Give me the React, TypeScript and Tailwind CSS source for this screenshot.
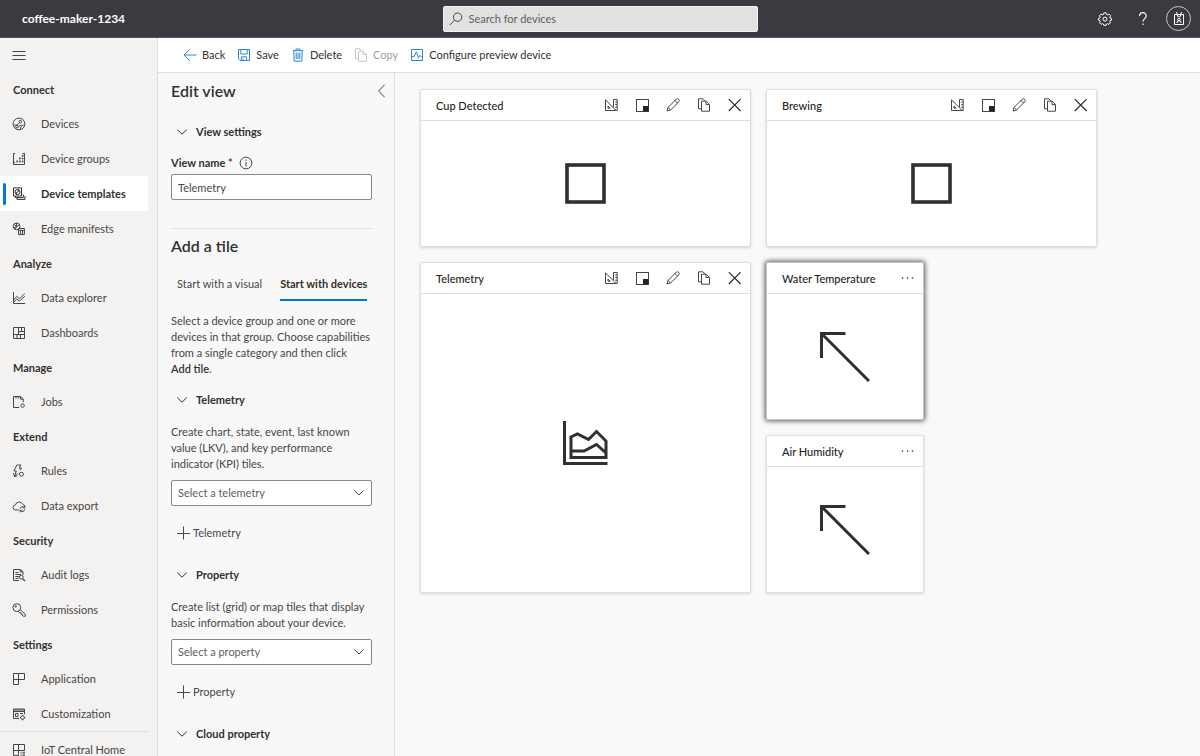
import type { ReactNode } from "react";

type IconProps = { className?: string; children: ReactNode; box?: string; sw?: number };

function Svg({ className = "size-3.5", children, box = "0 0 14 14", sw = 1 }: IconProps) {
  return (
    <svg
      viewBox={box}
      className={`${className} shrink-0`}
      fill="none"
      stroke="currentColor"
      strokeWidth={sw}
      aria-hidden="true"
    >
      {children}
    </svg>
  );
}

const icons: Record<string, ReactNode> = {
  devices: (
    <>
      <circle cx="7" cy="7" r="5.9" />
      <circle cx="8.3" cy="4.6" r="1.3" />
      <circle cx="5" cy="9.7" r="1.3" />
      <path d="M2 8.4C4 7.6 5.6 8 6.4 6.8L7.5 5.7M6.3 9.6L9.4 7.8M8.6 12.6C8.2 10.4 9.2 8 11.8 8.2" />
    </>
  ),
  groups: (
    <>
      <path d="M3 1.5H1.5V12.5H12.5V1.5H10.5M1.5 10.5H3" />
      <g fill="currentColor" stroke="none">
        <rect x="4.2" y="8.6" width="1.7" height="1.7" />
        <rect x="7" y="8.6" width="1.7" height="1.7" />
        <rect x="9.8" y="8.6" width="1.7" height="1.7" />
        <rect x="7" y="5.6" width="1.7" height="1.7" />
        <rect x="9.8" y="5.6" width="1.7" height="1.7" />
        <rect x="9.8" y="2.8" width="1.7" height="1.7" />
      </g>
    </>
  ),
  templates: (
    <>
      <path d="M1.5 .9H9.5V9H1.5ZM11.3 7.5V10.6H3.2V9M13 9V12.4H5V10.6" />
      <circle cx="5.5" cy="5" r="2.5" />
      <path d="M3.6 6.6L7.3 3.4M6.3 2.2V4.4M4.6 5.6V7.6" />
    </>
  ),
  edge: (
    <>
      <circle cx="4.6" cy="4.4" r="3.4" />
      <path d="M1.6 5.6L4.4 4.8L7.4 2.8M4.6 1V4.4M3.4 7.2L4.2 5M2.4 2.4L4.5 4.5" />
      <path d="M6.5 6.5H12.4V12.6H6.5ZM6.5 8.3H12.4M8.5 8.3V12.6M10.5 8.3V12.6" />
    </>
  ),
  explorer: <path d="M1.5 1V12.5H13.2M1.5 9.2L4.8 5.4L7.6 7.8L12.8 2.4M1.5 11.4L4.8 8.2L7.6 10L12.8 5.2" />,
  dashboards: <path d="M1.5 1.5H12.5V12.5H1.5ZM6.5 1.5V8.5M1.5 8.5H12.5M8.5 8.5V12.5M6.5 5.5H12.5M9.5 5.5V1.5M5 8.5V12.5" />,
  jobs: (
    <>
      <path d="M7.3 12.5H1.5V1.5H8.6L11.2 4V7.2M8.4 1.4V4.2H11.2M4 1.4V3.6M6.2 1.4V3.6" />
      <circle cx="10.6" cy="10.6" r="1.7" />
    </>
  ),
  rules: (
    <>
      <path d="M4.9 1H8.9L7.2 4.2H9.6L7.7 6.3M4.9 1L1.9 7H4.3L2.6 12.6L5.8 9.4M1.4 9.2L2.6 12.6L5.4 11.8" />
      <circle cx="9.4" cy="10.2" r="2" />
    </>
  ),
  export: (
    <>
      <path d="M7 11H3.6A2.5 2.5 0 0 1 3.4 6A3.9 3.9 0 0 1 10.8 5.4A2.6 2.6 0 0 1 13 7.5" />
      <path d="M8 9.8A2.4 2.4 0 0 1 12.3 8.6M12.7 6.8V8.9H10.6M12.7 10.4A2.4 2.4 0 0 1 8.4 11.6M8.1 13.3V11.3H10.2" />
    </>
  ),
  audit: (
    <>
      <path d="M7 12.5H1.5V1.5H8.4L11 3.8V7M8.2 1.3V4H11M3.4 4.5H6.4M3.4 6.5H9M3.4 8.5H7M3.4 10.5H6.4" />
      <circle cx="9.3" cy="9.2" r="1.9" />
      <path d="M10.6 10.6L13 13" strokeWidth="1.3" />
    </>
  ),
  permissions: (
    <>
      <circle cx="4.8" cy="4.6" r="3.9" />
      <circle cx="3.7" cy="3.5" r=".7" />
      <path d="M8.2 6.4L13.3 11.4V13.2H11.2L10.2 12.2V11H9V9.8H7.8L6 8.3" />
    </>
  ),
  application: <path d="M1.5 1.5H6.5V12.5H1.5ZM1.5 7.5H12.5V1.5H6.5" />,
  customization: (
    <>
      <path d="M7.2 11.5H1.5V2H12.5V7.4M1.5 4.5H12.5M1.5 3H12.5M3.5 6.5H6V9.5H3.5ZM8 6.5H11" />
      <circle cx="10.6" cy="10.6" r="1.8" />
      <path d="M10.6 7.8V8.8M10.6 12.4V13.4M7.8 10.6H8.8M12.4 10.6H13.4" />
    </>
  ),
  home: (
    <>
      <path d="M6.5 12.5H1.5V1.5H12.5V7.5H1.5M6.5 1.5V12.5" />
      <path d="M8.6 9.3H9.6M10.5 9.3H13M8.6 11H9.6M10.5 11H13M8.6 12.7H9.6M10.5 12.7H13" />
    </>
  ),
};

const nav: { title: string; items: [string, string][] }[] = [
  {
    title: "Connect",
    items: [
      ["Devices", "devices"],
      ["Device groups", "groups"],
      ["Device templates", "templates"],
      ["Edge manifests", "edge"],
    ],
  },
  { title: "Analyze", items: [["Data explorer", "explorer"], ["Dashboards", "dashboards"]] },
  { title: "Manage", items: [["Jobs", "jobs"]] },
  { title: "Extend", items: [["Rules", "rules"], ["Data export", "export"]] },
  { title: "Security", items: [["Audit logs", "audit"], ["Permissions", "permissions"]] },
  { title: "Settings", items: [["Application", "application"], ["Customization", "customization"]] },
];

function NavItem({ label, icon, active = false }: { label: string; icon: string; active?: boolean }) {
  return (
    <a
      href="#"
      aria-current={active ? "page" : undefined}
      className={`relative mr-[9px] flex h-[35px] shrink-0 items-center gap-[15px] pl-3 whitespace-nowrap ${
        active ? "bg-white font-bold text-[#323130]" : "text-[#484644]"
      }`}
    >
      {active && <span className="absolute left-[3px] h-[22px] w-[3px] rounded-sm bg-[#0078d4]" />}
      <Svg>{icons[icon]}</Svg>
      {label}
    </a>
  );
}

function Sidebar() {
  return (
    <nav className="flex w-[158px] shrink-0 flex-col border-r border-[#e1dfdd] bg-[#f3f2f1]">
      <button aria-label="Toggle navigation" className="flex h-[34px] shrink-0 items-center pl-3 text-[#484644]">
        <Svg>
          <path d="M.5 3.5H13.5M.5 7.5H13.5M.5 11.5H13.5" />
        </Svg>
      </button>
      {nav.map((group) => (
        <section key={group.title}>
          <h2 className="flex h-[34px] items-center pt-px pl-[13px] font-bold text-[#323130]">{group.title}</h2>
          {group.items.map(([label, icon]) => (
            <NavItem key={label} label={label} icon={icon} active={label === "Device templates"} />
          ))}
        </section>
      ))}
      <hr className="mr-[9px] border-[#e1dfdd]" />
      <NavItem label="IoT Central Home" icon="home" />
    </nav>
  );
}

function TopBar() {
  return (
    <header className="grid h-[38px] shrink-0 grid-cols-[1fr_315px_1fr] items-center border-b border-[#55545a] bg-[#3b3a40] text-white">
      <span className="pl-[22px] text-xs font-bold">coffee-maker-1234</span>
      <label className="flex h-[26px] items-center gap-1.5 rounded-xs border border-[#f3f2f1] bg-[#e1e1e1] px-[5px] text-[#484644]">
        <Svg>
          <circle cx="8.6" cy="5.2" r="4.2" />
          <path d="M5.6 8.2L.8 13" />
        </Svg>
        <input
          type="search"
          aria-label="Search for devices"
          placeholder="Search for devices"
          className="min-w-0 flex-1 bg-transparent outline-none placeholder:text-[#605e5c]"
        />
      </label>
      <div className="flex items-center justify-end pr-[9px]">
        <button aria-label="Settings">
          <Svg>
            <path d="M5.8 .9H8.2L8.6 2.5L9.6 2.9L11.1 2.1L12.6 3.7L11.8 5.1L12.2 6L13.4 6.3V8.3L12 8.7L11.7 9.6L12.4 10.9L10.9 12.4L9.5 11.6L8.6 12L8.2 13.3H5.8L5.4 12L4.5 11.6L3.1 12.4L1.6 10.9L2.3 9.6L2 8.7L.6 8.3V6.3L1.8 6L2.2 5.1L1.4 3.7L2.9 2.1L4.4 2.9L5.4 2.5Z" />
            <circle cx="7" cy="7.1" r="2" />
          </Svg>
        </button>
        <button aria-label="Help" className="ml-6">
          <Svg sw={1.2}>
            <path d="M3.6 4A3.3 3.3 0 0 1 10.2 4C10.2 6.4 7 6.8 7 9.6M7 11.6V13" />
          </Svg>
        </button>
        <button
          aria-label="Account"
          className="ml-4 flex size-[25px] items-center justify-center rounded-full border border-[#c8c6c4]"
        >
          <Svg>
            <path d="M2.5 2.5H11.5V12.5H2.5ZM4.4 0L5.4 2.5M9.6 0L8.6 2.5M5.4 2.5V4.2H8.6V2.5M4.9 11L5.6 8.9H8.4L9.1 11" />
            <circle cx="7" cy="7.3" r="1.3" />
          </Svg>
        </button>
      </div>
    </header>
  );
}

function CommandButton({ label, children, disabled = false }: { label: string; children: ReactNode; disabled?: boolean }) {
  return (
    <button disabled={disabled} className="flex items-center gap-[5px] text-[#323130] disabled:text-[#a19f9d]">
      <span className={disabled ? "text-[#c8c6c4]" : "text-[#2b88d8]"}>{children}</span>
      {label}
    </button>
  );
}

function CommandBar() {
  return (
    <div className="flex h-[35px] shrink-0 items-center gap-3 border-b border-[#e1dfdd] bg-white pl-[25px] whitespace-nowrap">
      <CommandButton label="Back">
        <Svg>
          <path d="M13.5 7H1M6.6 1.4L1 7L6.6 12.6" />
        </Svg>
      </CommandButton>
      <CommandButton label="Save">
        <Svg>
          <path d="M1.5 1.5H12.5V12.5H3.2L1.5 10.8ZM3.8 1.5V6H10.2V1.5M4.2 12.5V8.8H9.6V12.5M6 10.4V12.5" />
        </Svg>
      </CommandButton>
      <CommandButton label="Delete">
        <Svg>
          <path d="M1.8 2.7H12.2M5 2.7V1H9V2.7M2.8 2.7L3.2 13.2H10.8L11.2 2.7M5.2 4.6V11.2M7 4.6V11.2M8.8 4.6V11.2" />
        </Svg>
      </CommandButton>
      <CommandButton label="Copy" disabled>
        <CopyIcon />
      </CommandButton>
      <CommandButton label="Configure preview device">
        <Svg>
          <path d="M1.5 1.5H12.5V12.5H1.5ZM1.5 8.6H4L6.4 3.8L8.4 9.8L9.8 7.4L11.2 8.8H12.5" />
        </Svg>
      </CommandButton>
    </div>
  );
}

function CopyIcon() {
  return (
    <Svg>
      <path d="M4.5 10.8H1.5V.8H6L8 2.8M4.5 3.2H9.2L12.5 6.4V13.2H4.5ZM9 3.4V6.6H12.2" />
    </Svg>
  );
}

function Disclosure({ label }: { label: string }) {
  return (
    <button aria-expanded="true" className="flex h-[30px] items-center gap-[7px] pl-1 font-bold text-[#323130]">
      <Svg>
        <path d="M2.2 4.6L7 9.2L11.8 4.6" />
      </Svg>
      {label}
    </button>
  );
}

function Picker({ placeholder }: { placeholder: string }) {
  return (
    <div className="relative mt-2">
      <select
        aria-label={placeholder}
        className="h-[26px] w-full appearance-none rounded-xs border border-[#8a8886] bg-white pl-1.5 text-[#605e5c]"
      >
        <option>{placeholder}</option>
      </select>
      <span className="pointer-events-none absolute top-1.5 right-1.5 text-[#484644]">
        <Svg>
          <path d="M2.4 4.4L7 9L11.6 4.4" />
        </Svg>
      </span>
    </div>
  );
}

function AddButton({ label }: { label: string }) {
  return (
    <button className="mt-3 mb-3 flex h-[30px] items-center gap-[3px] pl-[5px] text-[#484644]">
      <Svg>
        <path d="M7.5 .5V13.5M1 7.5H14" />
      </Svg>
      {label}
    </button>
  );
}

function EditPanel() {
  return (
    <aside className="flex w-[237px] shrink-0 flex-col overflow-hidden border-r border-[#e1dfdd] bg-[#f8f8f8] pr-[22px] pl-[13px] text-[#484644]">
      <div className="-mr-4 flex h-9 shrink-0 items-center justify-between">
        <h1 className="text-base font-semibold text-[#323130]">Edit view</h1>
        <button aria-label="Collapse panel">
          <Svg>
            <path d="M10.6 .8L4.6 7L10.6 13.2" />
          </Svg>
        </button>
      </div>
      <div className="mt-2">
        <Disclosure label="View settings" />
      </div>
      <div className="mt-2 flex h-4 items-center">
        <label htmlFor="view-name" className="font-bold text-[#323130]">
          View name <span className="text-[#a4262c]">*</span>
        </label>
        <button aria-label="About view name" className="ml-1.5">
          <Svg>
            <circle cx="7" cy="7" r="5.9" />
            <path d="M7 6V10.4M7 3.6V4.8" />
          </Svg>
        </button>
      </div>
      <input
        id="view-name"
        defaultValue="Telemetry"
        className="mt-[3px] h-[26px] shrink-0 rounded-xs border border-[#8a8886] bg-white px-1.5"
      />
      <hr className="mt-7 border-[#e1dfdd]" />
      <h2 className="mt-[7px] text-base leading-5 font-semibold text-[#323130]">Add a tile</h2>
      <div role="tablist" className="mt-[13px] -mr-2 flex h-8 shrink-0 justify-start gap-[18px] pl-1.5 whitespace-nowrap">
        <button role="tab" aria-selected="false" className="border-b-2 border-transparent">
          Start with a visual
        </button>
        <button role="tab" aria-selected="true" className="border-b-2 border-[#0078d4] font-bold text-[#323130]">
          Start with devices
        </button>
      </div>
      <p className="mt-3 whitespace-nowrap">
        Select a device group and one or more
        <br />
        devices in that group. Choose capabilities
        <br />
        from a single category and then click
        <br />
        <b className="font-semibold text-[#323130]">Add tile</b>.
      </p>
      <div className="mt-2">
        <Disclosure label="Telemetry" />
        <p className="mt-[9px] whitespace-nowrap">
          Create chart, state, event, last known
          <br />
          value (LKV), and key performance
          <br />
          indicator (KPI) tiles.
        </p>
        <Picker placeholder="Select a telemetry" />
        <AddButton label="Telemetry" />
      </div>
      <div>
        <Disclosure label="Property" />
        <p className="mt-[9px] whitespace-nowrap">
          Create list (grid) or map tiles that display
          <br />
          basic information about your device.
        </p>
        <Picker placeholder="Select a property" />
        <AddButton label="Property" />
      </div>
      <Disclosure label="Cloud property" />
    </aside>
  );
}

function TileActions() {
  return (
    <div className="flex items-center gap-[17px] text-[#484644]">
      <button aria-label="Change visualization">
        <Svg>
          <path d="M1.5 1.9V12.5H12.2ZM4 8V10.2H6.2Z" />
          <path d="M9.5 9V1.5H13.2V12.5H12M11.2 4H13M11.2 6.6H13M11.2 9.2H13" />
        </Svg>
      </button>
      <button aria-label="Resize">
        <Svg>
          <rect x="1.5" y="1.5" width="12" height="12" />
          <rect x="8" y="8" width="5.5" height="5.5" fill="#252423" stroke="none" />
        </Svg>
      </button>
      <button aria-label="Edit">
        <Svg>
          <path d="M1 13L2 9.4L10.2 1.4A1.75 1.75 0 0 1 12.7 3.9L4.6 12ZM2 9.4L4.6 12M9 2.6L11.5 5.1" />
        </Svg>
      </button>
      <button aria-label="Duplicate">
        <CopyIcon />
      </button>
      <button aria-label="Remove" className="text-[#252423]">
        <Svg sw={1.1}>
          <path d="M.8 1.2L12.6 13M12.6 1.2L.8 13" />
        </Svg>
      </button>
    </div>
  );
}

function Tile({
  title,
  span,
  compact = false,
  selected = false,
  children,
}: {
  title: string;
  span: string;
  compact?: boolean;
  selected?: boolean;
  children: ReactNode;
}) {
  return (
    <article
      className={`flex flex-col rounded-xs border bg-white text-[#252423] ${span} ${
        selected
          ? "border-[#c8c6c4] shadow-[0_0_5px_1px_rgba(0,0,0,0.65)]"
          : "border-[#e1dfdd] shadow-[0_1px_3px_rgba(0,0,0,0.15)]"
      }`}
    >
      <header className="flex h-[31px] shrink-0 items-center justify-between border-b border-[#e1dfdd] pr-2 pl-[15px]">
        <h3 className="pt-px font-medium whitespace-nowrap">{title}</h3>
        {compact ? (
          <button aria-label="More options">
            <Svg>
              <g fill="currentColor" stroke="none">
                <circle cx="1.5" cy="7" r=".8" />
                <circle cx="6.5" cy="7" r=".8" />
                <circle cx="11.5" cy="7" r=".8" />
              </g>
            </Svg>
          </button>
        ) : (
          <TileActions />
        )}
      </header>
      <div className="flex flex-1 items-center justify-center text-[#30302f]">{children}</div>
    </article>
  );
}

function SquareGlyph() {
  return (
    <Svg className="size-[50px]" box="0 0 50 50" sw={3.6}>
      <rect x="6" y="6" width="37" height="37" />
    </Svg>
  );
}

function ArrowGlyph() {
  return (
    <Svg className="size-[50px]" box="0 0 50 50" sw={3}>
      <path d="M25.5 1.5H1.5V26M1.5 1.5L49 49" />
    </Svg>
  );
}

function AreaChartGlyph() {
  return (
    <Svg className="size-[46px]" box="0 0 46 46" sw={3}>
      <path d="M1.5 1V43.5H44.5" />
      <path d="M8 37.5V17L14.5 14L25.5 19.5L33.5 11.5L43 21V37.5ZM8 31H21L33.5 24.5L43 33" />
    </Svg>
  );
}

export default function App() {
  return (
    <div className="flex h-screen flex-col overflow-hidden bg-[#faf9f8] font-['Lato','Open_Sans',sans-serif] text-[11px] leading-4">
      <TopBar />
      <div className="flex min-h-0 flex-1">
        <Sidebar />
        <div className="flex min-w-0 flex-1 flex-col">
          <CommandBar />
          <div className="flex min-h-0 flex-1">
            <EditPanel />
            <main className="min-w-0 flex-1 overflow-hidden">
              <div className="grid auto-rows-[158px] grid-cols-[repeat(4,158px)] gap-[15px] pt-4 pl-[25px]">
                <Tile title="Cup Detected" span="col-span-2">
                  <SquareGlyph />
                </Tile>
                <Tile title="Brewing" span="col-span-2">
                  <SquareGlyph />
                </Tile>
                <Tile title="Telemetry" span="col-span-2 row-span-2">
                  <AreaChartGlyph />
                </Tile>
                <Tile title="Water Temperature" span="col-span-1" compact selected>
                  <ArrowGlyph />
                </Tile>
                <Tile title="Air Humidity" span="col-span-1 col-start-3" compact>
                  <ArrowGlyph />
                </Tile>
              </div>
            </main>
          </div>
        </div>
      </div>
    </div>
  );
}
